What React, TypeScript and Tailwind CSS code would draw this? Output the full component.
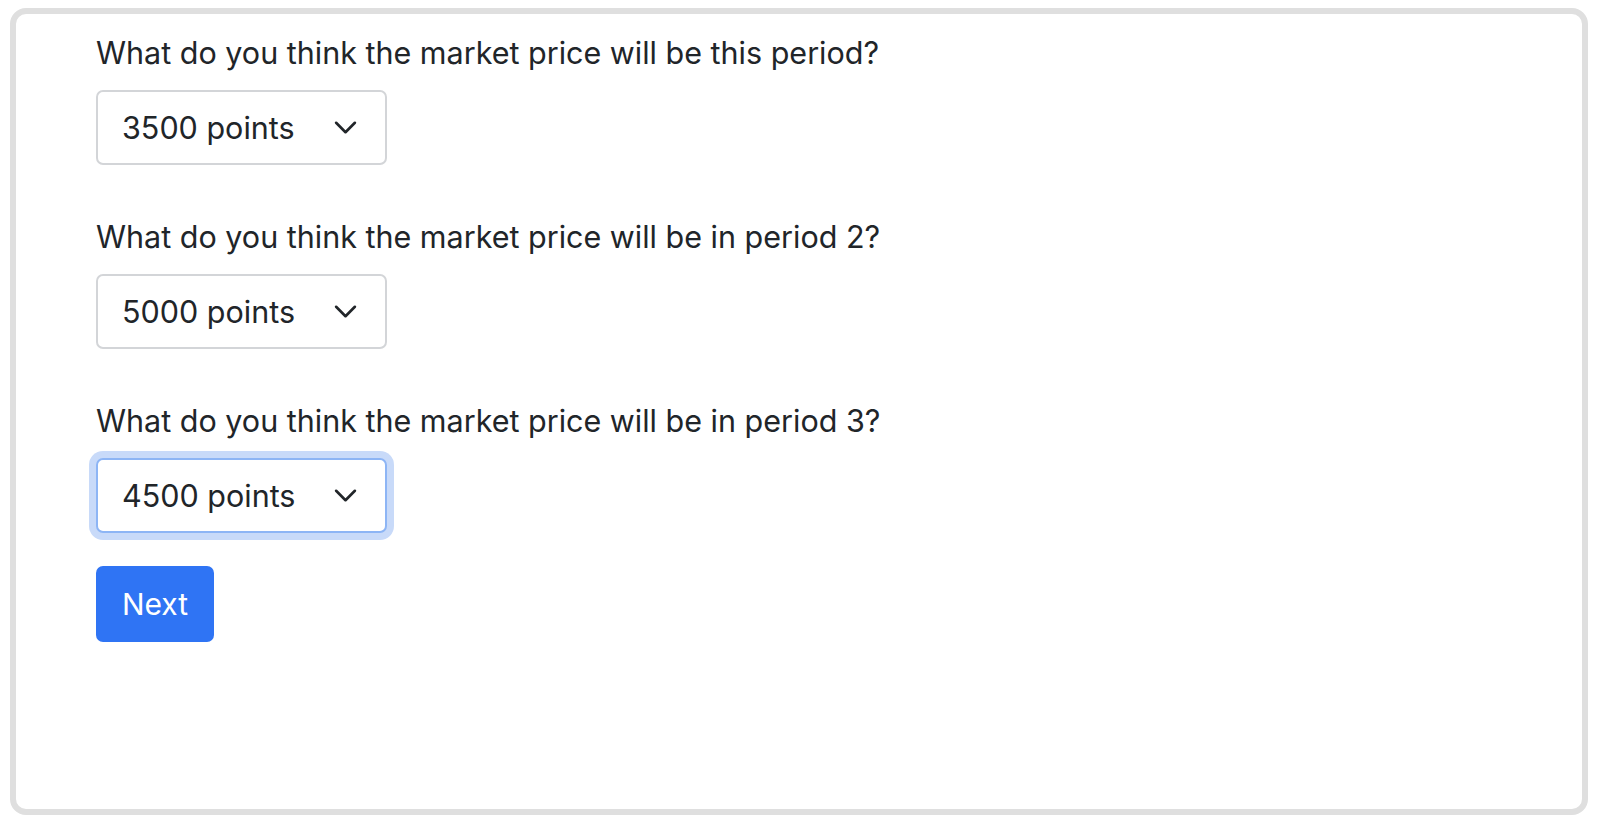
const questions = [
  { label: 'What do you think the market price will be this period?', value: '3500 points', focused: false },
  { label: 'What do you think the market price will be in period 2?', value: '5000 points', focused: false },
  { label: 'What do you think the market price will be in period 3?', value: '4500 points', focused: true },
];

function PriceSelect({ value, focused }: { value: string; focused: boolean }) {
  return (
    <div
      className={`flex items-center justify-between w-[291px] h-[75px] rounded-[7px] bg-white pl-[24px] pr-[27px] border-2 ${
        focused ? 'border-[#8db5f5] ring-[7px] ring-[#c8daf9]' : 'border-[#d3d5d8]'
      }`}
    >
      <span className="text-[30.5px] text-[#212529]">{value}</span>
      <svg viewBox="0 0 16 16" className="w-[25px] h-[25px]" fill="none" stroke="#212529" strokeWidth={1.7} strokeLinecap="round" strokeLinejoin="round">
        <path d="m2 5 6 6 6-6" />
      </svg>
    </div>
  );
}

export default function App() {
  return (
    <div
      className="h-[828px] bg-white px-[10px] pt-[8px] pb-[13px]"
      style={{ fontFamily: 'Inter, "Liberation Sans", Arial, sans-serif' }}
    >
      <div className="h-full border-[6px] border-[#dfdfdf] rounded-[16px] pl-[80px] pt-[18px]">
        {questions.map((q, i) => (
          <div key={i} className={i === 0 ? '' : 'mt-[51px]'}>
            <p className="text-[30.5px] leading-[42px] text-[#212529]">{q.label}</p>
            <div className="mt-[16px]">
              <PriceSelect value={q.value} focused={q.focused} />
            </div>
          </div>
        ))}
        <button className="mt-[33px] w-[118px] h-[76px] rounded-[7px] bg-[#2f74f4] text-white text-[30px]">
          Next
        </button>
      </div>
    </div>
  );
}
